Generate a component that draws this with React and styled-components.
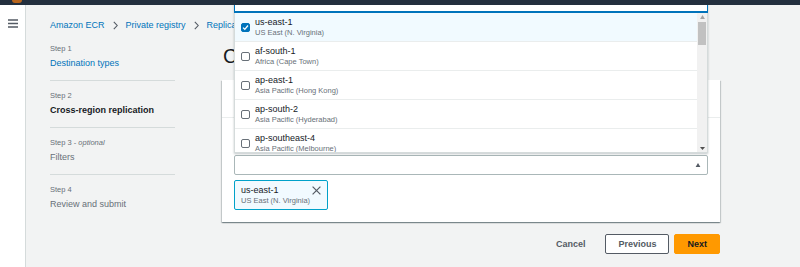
import React from 'react';
import styled, { createGlobalStyle } from 'styled-components';

const GlobalStyle = createGlobalStyle`
  html, body { margin: 0; padding: 0; }
  body {
    font-family: "Liberation Sans", Arial, sans-serif;
    background: #f2f3f3;
    color: #16191f;
    overflow: hidden;
  }
  * { box-sizing: border-box; }
`;

const Page = styled.div`
  display: flex;
  flex-direction: column;
  height: 267px;
`;

const TopBar = styled.header`
  position: relative;
  z-index: 10;
  height: 5px;
  flex-shrink: 0;
  background: #232f3e;
  display: flex;
  padding-left: 12px;
`;

const LogoTip = styled.span`
  width: 10px;
  height: 3px;
  background: #b8651d;
  border-radius: 0 0 3px 3px;
`;

const Body = styled.div`
  display: flex;
  flex: 1;
  min-height: 0;
`;

const SideNav = styled.nav`
  width: 26px;
  flex-shrink: 0;
  background: #fff;
  border-right: 1px solid #d5dbdb;
  padding: 9px 0 0 8px;
`;

const Main = styled.main`
  flex: 1;
  padding: 13px 0 0 24px;
`;

const Breadcrumbs = styled.nav`
  display: flex;
  align-items: center;
  gap: 8px;
  height: 14px;
  font-size: 9px;
  white-space: nowrap;
`;

const Crumb = styled.a`
  color: #0073bb;
  text-decoration: none;
`;

const Layout = styled.div`
  display: grid;
  grid-template-columns: 125px 498px;
  column-gap: 47px;
  margin-top: 12px;
`;

const StepList = styled.ol`
  list-style: none;
  margin: 0;
  padding: 0;
`;

const Step = styled.li`
  padding: 10px 0;
  border-top: 1px solid #d5dbdb;
  &:first-child {
    padding-top: 0;
    border-top: none;
  }
`;

const StepLabel = styled.div`
  font-size: 7.5px;
  line-height: 10px;
  color: #687078;
  margin-bottom: 2px;
  em { font-style: italic; }
`;

const StepName = styled.div`
  font-size: 9px;
  line-height: 14px;
  color: ${p => (p.$state === 'link' ? '#0073bb' : p.$state === 'current' ? '#16191f' : '#687078')};
  font-weight: ${p => (p.$state === 'current' ? 700 : 400)};
`;

const Content = styled.section`
  display: flex;
  flex-direction: column;
`;

const Title = styled.h1`
  margin: 0 0 12px 1px;
  font-size: 20px;
  line-height: 24px;
  font-weight: 400;
  color: #16191f;
  white-space: nowrap;
`;

const Card = styled.div`
  background: #fff;
  box-shadow: 0 1px 1px 0 rgba(0, 28, 36, 0.3), 1px 1px 1px 0 rgba(0, 28, 36, 0.15),
    -1px 1px 1px 0 rgba(0, 28, 36, 0.15);
`;

const CardHeader = styled.div`
  height: 38px;
  border-bottom: 1px solid #eaeded;
`;

const CardBody = styled.div`
  padding: 37px 12px 12px;
`;

const SelectWrap = styled.div`
  position: relative;
`;

const SelectTrigger = styled.div`
  height: 20px;
  background: #fff;
  border: 1px solid #aab7b8;
  border-radius: 2px;
  display: flex;
  align-items: center;
  justify-content: flex-end;
  padding-right: 6px;
`;

const Dropdown = styled.div`
  position: absolute;
  left: 0;
  right: 0;
  bottom: calc(100% + 2px);
  z-index: 5;
  display: flex;
  flex-direction: column;
  background: #fff;
  box-shadow: 0 1px 2px rgba(0, 28, 36, 0.25);
`;

const FilterBox = styled.div`
  height: 32px;
  border: 1px solid #0073bb;
  border-bottom-width: 2px;
  background: #fff;
`;

const ListArea = styled.div`
  display: flex;
  height: 140px;
  border: 1px solid #d5dbdb;
  border-top: none;
`;

const Options = styled.ul`
  flex: 1;
  list-style: none;
  margin: 0;
  padding: 0;
  overflow: hidden;
`;

const Option = styled.li`
  display: flex;
  align-items: center;
  gap: 5px;
  height: 29px;
  flex-shrink: 0;
  padding: 0 6px;
  border-bottom: 1px solid #eaeded;
  background: ${p => (p.$selected ? '#f1faff' : '#fff')};
`;

const Box = styled.span`
  width: 9px;
  height: 9px;
  flex-shrink: 0;
  border-radius: 2px;
  border: 1px solid ${p => (p.$checked ? '#0073bb' : '#687078')};
  background: ${p => (p.$checked ? '#0073bb' : '#fff')};
  display: flex;
  align-items: center;
  justify-content: center;
`;

const OptionText = styled.div`
  display: flex;
  flex-direction: column;
`;

const Primary = styled.span`
  font-size: 9px;
  line-height: 11px;
  color: #16191f;
`;

const Secondary = styled.span`
  font-size: 7.5px;
  line-height: 10px;
  color: #687078;
`;

const ScrollTrack = styled.div`
  width: 10px;
  background: #f1f1f1;
  display: flex;
  flex-direction: column;
  align-items: center;
`;

const ScrollArrow = styled.div`
  height: 8px;
  display: flex;
  align-items: center;
  justify-content: center;
`;

const Thumb = styled.div`
  width: 8px;
  height: 23px;
  margin-top: 1px;
  background: #c1c1c1;
`;

const Spacer = styled.div`
  flex: 1;
`;

const Token = styled.div`
  margin-top: 5px;
  width: 94px;
  height: 30px;
  display: flex;
  justify-content: space-between;
  align-items: flex-start;
  padding: 3px 6px 3px 6px;
  background: #f1faff;
  border: 1px solid #00a1c9;
  border-radius: 2px;
`;

const TokenText = styled.div`
  display: flex;
  flex-direction: column;
`;

const TokenLabel = styled.span`
  font-size: 9px;
  line-height: 12px;
`;

const Dismiss = styled.button`
  border: none;
  background: none;
  padding: 0;
  margin-top: 2px;
  display: flex;
  cursor: pointer;
`;

const Actions = styled.div`
  display: flex;
  justify-content: flex-end;
  align-items: center;
  gap: 5px;
  margin-top: 12px;
`;

const Button = styled.button`
  height: 20px;
  padding: 0 12px;
  font-family: inherit;
  font-size: 9px;
  font-weight: 700;
  border-radius: 2px;
  cursor: pointer;
  border: 1px solid
    ${p => (p.$variant === 'primary' ? '#ff9900' : p.$variant === 'normal' ? '#545b64' : 'transparent')};
  background: ${p => (p.$variant === 'primary' ? '#ff9900' : p.$variant === 'normal' ? '#fff' : 'transparent')};
  color: ${p => (p.$variant === 'primary' ? '#16191f' : '#545b64')};
  margin-right: ${p => (p.$variant === 'link' ? '2px' : '0')};
`;

const Chevron = () => (
  <svg width="5" height="9" viewBox="0 0 5 9">
    <path d="M0.8 0.8 L4.2 4.5 L0.8 8.2" fill="none" stroke="#545b64" strokeWidth="1.1" />
  </svg>
);

const Hamburger = () => (
  <svg width="10" height="9" viewBox="0 0 10 9">
    <path d="M0 1 H10 M0 4.5 H10 M0 8 H10" stroke="#545b64" strokeWidth="1.4" />
  </svg>
);

const Check = () => (
  <svg width="7" height="7" viewBox="0 0 7 7">
    <path d="M1 3.6 L2.8 5.3 L6 1.5" fill="none" stroke="#fff" strokeWidth="1.3" />
  </svg>
);

const TriangleUp = ({ size = 6, color = '#545b64' }) => (
  <svg width={size} height={size * 0.8} viewBox="0 0 6 5">
    <path d="M0 5 L3 0 L6 5 Z" fill={color} />
  </svg>
);

const TriangleDown = ({ size = 5, color = '#505050' }) => (
  <svg width={size} height={size * 0.6} viewBox="0 0 5 3">
    <path d="M0 0 L5 0 L2.5 3 Z" fill={color} />
  </svg>
);

const CloseIcon = () => (
  <svg width="9" height="9" viewBox="0 0 9 9">
    <path d="M0.6 0.6 L8.4 8.4 M8.4 0.6 L0.6 8.4" stroke="#545b64" strokeWidth="1.2" />
  </svg>
);

const regions = [
  { code: 'us-east-1', name: 'US East (N. Virginia)', selected: true },
  { code: 'af-south-1', name: 'Africa (Cape Town)' },
  { code: 'ap-east-1', name: 'Asia Pacific (Hong Kong)' },
  { code: 'ap-south-2', name: 'Asia Pacific (Hyderabad)' },
  { code: 'ap-southeast-4', name: 'Asia Pacific (Melbourne)' },
];

const steps = [
  { label: 'Step 1', name: 'Destination types', state: 'link' },
  { label: 'Step 2', name: 'Cross-region replication', state: 'current' },
  { label: 'Step 3', optional: true, name: 'Filters', state: 'disabled' },
  { label: 'Step 4', name: 'Review and submit', state: 'disabled' },
];

export default function App() {
  return (
    <Page>
      <GlobalStyle />
      <TopBar>
        <LogoTip />
      </TopBar>
      <Body>
        <SideNav>
          <Hamburger />
        </SideNav>
        <Main>
          <Breadcrumbs>
            <Crumb href="#">Amazon ECR</Crumb>
            <Chevron />
            <Crumb href="#">Private registry</Crumb>
            <Chevron />
            <Crumb href="#">Replicatio</Crumb>
          </Breadcrumbs>
          <Layout>
            <StepList>
              {steps.map(s => (
                <Step key={s.label}>
                  <StepLabel>
                    {s.label}
                    {s.optional && (
                      <>
                        {' - '}
                        <em>optional</em>
                      </>
                    )}
                  </StepLabel>
                  <StepName $state={s.state}>{s.name}</StepName>
                </Step>
              ))}
            </StepList>
            <Content>
              <Title>C</Title>
              <Card>
                <CardHeader />
                <CardBody>
                  <SelectWrap>
                    <Dropdown>
                      <FilterBox />
                      <ListArea>
                        <Options>
                          {regions.map(r => (
                            <Option key={r.code} $selected={r.selected}>
                              <Box $checked={r.selected}>{r.selected && <Check />}</Box>
                              <OptionText>
                                <Primary>{r.code}</Primary>
                                <Secondary>{r.name}</Secondary>
                              </OptionText>
                            </Option>
                          ))}
                        </Options>
                        <ScrollTrack>
                          <ScrollArrow>
                            <TriangleUp size={5} color="#a3a3a3" />
                          </ScrollArrow>
                          <Thumb />
                          <Spacer />
                          <ScrollArrow>
                            <TriangleDown />
                          </ScrollArrow>
                        </ScrollTrack>
                      </ListArea>
                    </Dropdown>
                    <SelectTrigger>
                      <TriangleUp />
                    </SelectTrigger>
                  </SelectWrap>
                  <Token>
                    <TokenText>
                      <TokenLabel>us-east-1</TokenLabel>
                      <Secondary>US East (N. Virginia)</Secondary>
                    </TokenText>
                    <Dismiss aria-label="Remove">
                      <CloseIcon />
                    </Dismiss>
                  </Token>
                </CardBody>
              </Card>
              <Actions>
                <Button $variant="link">Cancel</Button>
                <Button $variant="normal">Previous</Button>
                <Button $variant="primary">Next</Button>
              </Actions>
            </Content>
          </Layout>
        </Main>
      </Body>
    </Page>
  );
}
